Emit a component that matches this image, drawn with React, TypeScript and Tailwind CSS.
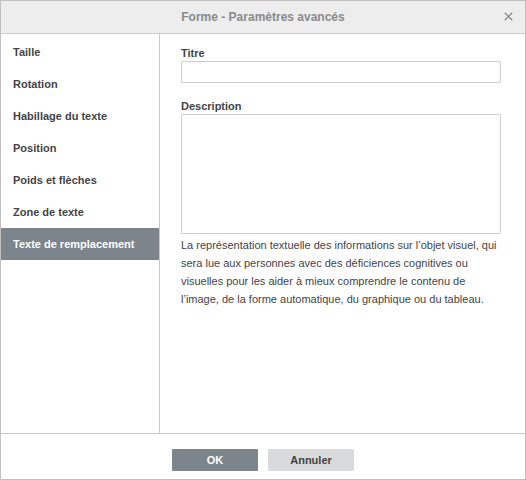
import { X } from "lucide-react";

const items = [
  "Taille",
  "Rotation",
  "Habillage du texte",
  "Position",
  "Poids et flèches",
  "Zone de texte",
  "Texte de remplacement",
];

export default function App() {
  return (
    <div
      className="w-[526px] h-[480px] flex flex-col border border-[#c0c0c0] bg-white text-[#444] text-[11px]"
      style={{ fontFamily: "'Liberation Sans', Arial, sans-serif" }}
    >
      {/* Header */}
      <div className="relative h-[33px] shrink-0 flex items-center justify-center bg-[#ededed] border-b border-[#cbcbcb]">
        <span className="text-[12px] font-bold text-[#8a8a8a]">Forme - Paramètres avancés</span>
        <X className="absolute right-[10px] top-[9px] size-[13px] text-[#808080]" strokeWidth={2.25} />
      </div>

      {/* Body */}
      <div className="flex flex-1 border-b border-[#cbcbcb]">
        <div className="w-[159px] shrink-0 border-r border-[#cbcbcb] pt-[2px]">
          {items.map((it, i) => (
            <div
              key={it}
              className={
                "h-[32px] flex items-center pl-[12px] font-bold " +
                (i === items.length - 1 ? "bg-[#7d858c] text-white" : "text-[#444]")
              }
            >
              {it}
            </div>
          ))}
        </div>

        <div className="flex-1 pl-[21px] pr-[24px] pt-[12px]">
          <div className="font-bold h-[15px] leading-[15px]">Titre</div>
          <div className="h-[22px] border border-[#cfcfcf] rounded-[1px]" />
          <div className="mt-[16px] font-bold h-[15px] leading-[15px]">Description</div>
          <div className="h-[120px] border border-[#cfcfcf] rounded-[1px]" />
          <p className="mt-[2px] leading-[18px] text-[#444]">
            La représentation textuelle des informations sur l’objet visuel, qui sera lue aux personnes avec des
            déficiences cognitives ou visuelles pour les aider à mieux comprendre le contenu de l’image, de la forme
            automatique, du graphique ou du tableau.
          </p>
        </div>
      </div>

      {/* Footer */}
      <div className="h-[45px] shrink-0 flex items-start justify-center gap-[10px] pt-[15px]">
        <button className="w-[86px] h-[22px] bg-[#7d858c] text-white font-bold rounded-[1px]">OK</button>
        <button className="w-[86px] h-[22px] bg-[#d8dadc] text-[#444] font-bold rounded-[1px]">Annuler</button>
      </div>
    </div>
  );
}
